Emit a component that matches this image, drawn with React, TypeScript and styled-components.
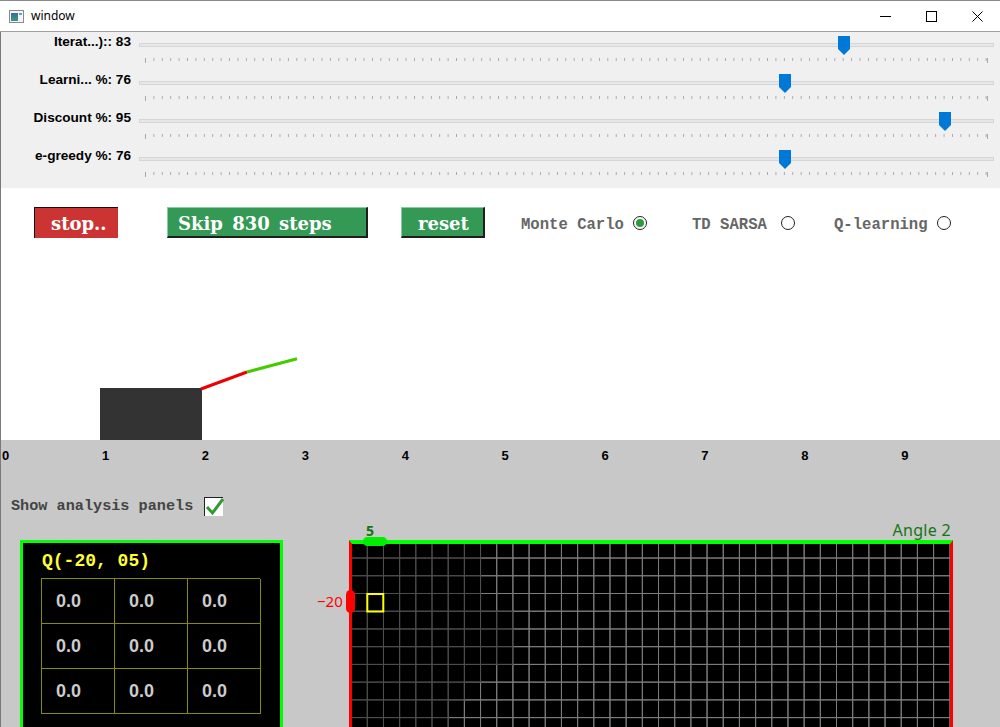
import React from 'react';
import styled, { createGlobalStyle } from 'styled-components';

const GlobalStyle = createGlobalStyle`
  html, body {
    margin: 0;
    padding: 0;
    background: #c8c8c8;
    overflow: hidden;
  }
  body {
    width: 1000px;
    height: 727px;
  }
`;

const Window = styled.div`
  width: 1000px;
  height: 727px;
  overflow: hidden;
  display: flex;
  flex-direction: column;
  border-top: 1px solid #8a8a8a;
  box-sizing: border-box;
`;

const TitleBar = styled.div`
  height: 30px;
  flex: 0 0 30px;
  background: #ffffff;
  border-bottom: 1px solid #a0a0a0;
  display: flex;
  align-items: center;
`;

const TitleText = styled.span`
  font-family: 'Noto Sans', 'Liberation Sans', sans-serif;
  font-size: 12px;
  color: #000;
  margin-left: 7px;
  margin-top: -1px;
`;

const TitleIcon = styled.div`
  margin-left: 9px;
  display: flex;
`;

const Spacer = styled.div`
  flex: 1;
`;

const CaptionButton = styled.div`
  width: 46px;
  height: 30px;
  display: flex;
  align-items: center;
  justify-content: center;
`;

const Body = styled.div`
  flex: 1;
  display: flex;
  flex-direction: column;
  border-left: 1px solid #7a7a7a;
`;

const SliderPanel = styled.div`
  background: #f0f0f0;
  height: 156px;
  padding-top: 1px;
  box-sizing: border-box;
`;

const SliderRow = styled.div`
  display: grid;
  grid-template-columns: 138px 1fr;
  height: 38px;
`;

const SliderLabel = styled.div`
  font-family: 'Liberation Sans', Arial, sans-serif;
  font-weight: bold;
  font-size: 13.6px;
  line-height: 15px;
  color: #000;
  text-align: right;
  padding-right: 8px;
  padding-top: 1px;
  white-space: nowrap;
`;

const SliderTrackArea = styled.div`
  position: relative;
  margin-right: 6px;
`;

const Track = styled.div`
  position: absolute;
  left: 0;
  right: 0;
  top: 10px;
  height: 2px;
  background: #e7e7e7;
  border: 1px solid #d6d6d6;
`;

const Ticks = styled.div`
  position: absolute;
  left: 6px;
  width: 843px;
  top: 25px;
  height: 3px;
  background-image: linear-gradient(to right, #a8a8a8 1px, transparent 1px);
  background-size: 8.42px 3px;
  background-repeat: repeat-x;

  &::before,
  &::after {
    content: '';
    position: absolute;
    top: 0;
    width: 1px;
    height: 5px;
    background: #a8a8a8;
  }
  &::before {
    left: 0;
  }
  &::after {
    right: 0;
  }
`;

const Thumb = styled.svg`
  position: absolute;
  top: 3px;
  width: 12px;
  height: 19px;
`;

const WhiteArea = styled.div`
  background: #ffffff;
  height: 252px;
  display: flex;
  flex-direction: column;
`;

const ControlsRow = styled.div`
  display: flex;
  align-items: center;
  height: 31px;
  margin-top: 19px;
  padding-left: 33px;
`;

const ActionButton = styled.div<{ $bg: string; $w: number; $pad: number; $gap: number; $pressed?: boolean }>`
  width: ${(p) => p.$w}px;
  height: 31px;
  margin-left: ${(p) => p.$gap}px;
  background: ${(p) => p.$bg};
  box-sizing: border-box;
  padding-left: ${(p) => p.$pad}px;
  padding-top: 2px;
  border-style: solid;
  border-width: ${(p) => (p.$pressed ? '1px 0 0 1px' : '1px 2px 2px 1px')};
  border-color: ${(p) => (p.$pressed ? '#111 #111 #111 #111' : '#8fc9a4 #1e1e1e #1e1e1e #8fc9a4')};
  color: #ffffff;
  font-family: 'DejaVu Serif', 'Liberation Serif', serif;
  font-weight: bold;
  font-size: 18px;
  line-height: 27px;
  white-space: nowrap;
  word-spacing: 3px;
`;

const RadioItem = styled.div<{ $gap: number }>`
  display: flex;
  align-items: center;
  margin-left: ${(p) => p.$gap}px;
  padding-top: 4px;
  font-family: 'Liberation Mono', 'Courier New', monospace;
  font-weight: bold;
  font-size: 15.6px;
  color: #666666;
  white-space: nowrap;
`;

const RadioText = styled.span<{ $w: number }>`
  display: inline-block;
  width: ${(p) => p.$w}px;
`;

const RadioCircle = styled.div<{ $on?: boolean }>`
  width: 12px;
  height: 12px;
  border: 1.5px solid #222;
  border-radius: 50%;
  margin-left: 9px;
  margin-top: -3px;
  display: flex;
  align-items: center;
  justify-content: center;
  background: #fff;

  &::after {
    content: '';
    display: ${(p) => (p.$on ? 'block' : 'none')};
    width: 8px;
    height: 8px;
    border-radius: 50%;
    background: #2f9a3c;
  }
`;

const Stage = styled.svg`
  display: block;
  margin-top: auto;
`;

const GrayArea = styled.div`
  flex: 1;
  background: #c8c8c8;
  display: flex;
  flex-direction: column;
`;

const Ruler = styled.div`
  display: flex;
  height: 30px;
  padding-top: 8px;
  box-sizing: border-box;
`;

const RulerMark = styled.div`
  width: 100px;
  padding-left: 1px;
  font-family: 'Liberation Sans', Arial, sans-serif;
  font-weight: bold;
  font-size: 13px;
  line-height: 15px;
  color: #000;
`;

const ToggleRow = styled.div`
  display: flex;
  align-items: center;
  margin-top: 26px;
  padding-left: 10px;
  height: 20px;
`;

const ToggleLabel = styled.span`
  font-family: 'Liberation Mono', 'Courier New', monospace;
  font-weight: bold;
  font-size: 15.2px;
  color: #444444;
  white-space: nowrap;
`;

const CheckBox = styled.div`
  width: 19px;
  height: 19px;
  margin-left: 11px;
  background: #ffffff;
  box-sizing: border-box;
  border-top: 1px solid #222;
  border-left: 1px solid #222;
  position: relative;
`;

const CheckMark = styled.svg`
  position: absolute;
  left: -1px;
  top: -3px;
`;

const PanelsRow = styled.div`
  display: flex;
  align-items: flex-start;
  margin-top: 6px;
  padding-left: 19px;
`;

const QPanel = styled.div`
  margin-top: 18px;
  width: 263px;
  height: 200px;
  box-sizing: border-box;
  background: #000;
  border: 3px solid #00ff00;
  padding: 6px 0 0 18px;
`;

const QTitle = styled.div`
  font-family: 'Liberation Mono', 'Courier New', monospace;
  font-weight: bold;
  font-size: 18px;
  line-height: 24px;
  color: #ffff33;
  padding-left: 1px;
  margin-bottom: 5px;
`;

const QTable = styled.div`
  display: grid;
  grid-template-columns: repeat(3, 73px);
  grid-auto-rows: 45px;
  width: 219px;
  border-top: 1px solid #8a8a00;
  border-left: 1px solid #8a8a00;
  box-sizing: border-box;
`;

const QCell = styled.div`
  border-right: 1px solid #8a8a00;
  border-bottom: 1px solid #8a8a00;
  display: flex;
  align-items: center;
  padding-left: 14px;
  font-family: 'Liberation Sans', Arial, sans-serif;
  font-weight: bold;
  font-size: 18px;
  color: #cccccc;
`;

const GridPanel = styled.div`
  margin-left: 66px;
  width: 604px;
  display: flex;
  flex-direction: column;
`;

const GridHeader = styled.div`
  height: 18px;
  display: flex;
  justify-content: flex-end;
  align-items: flex-end;
  position: relative;
`;

const AxisTitle = styled.span`
  font-family: 'Noto Sans', 'Liberation Sans', sans-serif;
  font-size: 16px;
  line-height: 18px;
  letter-spacing: 0.3px;
  color: #117711;
  margin-right: 2px;
  margin-bottom: 1px;
`;

const ColLabel = styled.span`
  position: absolute;
  left: 17px;
  bottom: 2px;
  font-family: 'Noto Sans', 'Liberation Sans', sans-serif;
  font-weight: bold;
  font-size: 14px;
  line-height: 14px;
  color: #117711;
`;

const GridBox = styled.div`
  position: relative;
  height: 200px;
  background: #000;
  border-left: 3px solid #ff0000;
  border-right: 3px solid #ff0000;
  border-top: 4px solid #00ff00;
`;

const ColHandle = styled.div`
  position: absolute;
  left: 11px;
  top: -7px;
  width: 24px;
  height: 9px;
  border-radius: 5px;
  background: #00ee00;
`;

const RowHandle = styled.div`
  position: absolute;
  left: -6px;
  top: 46px;
  width: 9px;
  height: 23px;
  border-radius: 5px;
  background: #ff0000;
`;

const RowLabel = styled.span`
  position: absolute;
  left: -35px;
  top: 50px;
  font-family: 'Noto Sans', 'Liberation Sans', sans-serif;
  font-size: 15px;
  line-height: 15px;
  color: #ff0000;
`;

const GridSvg = styled.svg`
  display: block;
`;

const sliders = [
  { label: 'Iterat...):: 83', value: 83 },
  { label: 'Learni... %: 76', value: 76 },
  { label: 'Discount %: 95', value: 95 },
  { label: 'e-greedy %: 76', value: 76 },
];

const COLS = 37;
const ROWS = 12;
const CW = 16.18;
const RH = 17.73;
const visited = [8, 8, 8, 8, 10, 10, 10, 8, 7, 6, 6, 5];

const CartGrid = () => {
  const cells: React.ReactNode[] = [];
  for (let pass = 0; pass < 2; pass++) {
    for (let r = 0; r < ROWS; r++) {
      for (let c = 0; c < COLS; c++) {
        const dark = c < visited[r];
        if ((pass === 0) === dark) continue;
        cells.push(
          <rect
            key={`${pass}-${r}-${c}`}
            x={-0.9 + c * CW}
            y={-3.7 + r * RH}
            width={CW}
            height={RH}
            fill="none"
            stroke={dark ? '#4e4e4e' : '#7c7c7c'}
            strokeWidth={1}
          />
        );
      }
    }
  }
  return (
    <GridSvg width={598} height={200}>
      {cells}
      <rect x={15.3} y={50} width={16} height={17.5} fill="none" stroke="#ffff00" strokeWidth={2} />
    </GridSvg>
  );
};

export default function App() {
  return (
    <>
      <GlobalStyle />
      <Window>
        <TitleBar>
          <TitleIcon>
            <svg width="15" height="13" viewBox="0 0 15 13">
              <rect x="0.5" y="0.5" width="14" height="12" fill="#f4f4f4" stroke="#8a8a8a" />
              <defs>
                <linearGradient id="ig" x1="0" y1="0" x2="0" y2="1">
                  <stop offset="0" stopColor="#2f6fa8" />
                  <stop offset="1" stopColor="#3f9a7a" />
                </linearGradient>
              </defs>
              <rect x="2" y="3" width="7" height="8" fill="url(#ig)" />
              <rect x="10" y="3" width="3" height="2" fill="#6aa0c8" />
            </svg>
          </TitleIcon>
          <TitleText>window</TitleText>
          <Spacer />
          <CaptionButton>
            <svg width="11" height="11" viewBox="0 0 11 11">
              <line x1="0" y1="5.5" x2="11" y2="5.5" stroke="#000" strokeWidth="1" />
            </svg>
          </CaptionButton>
          <CaptionButton>
            <svg width="11" height="11" viewBox="0 0 11 11">
              <rect x="0.5" y="0.5" width="10" height="10" fill="none" stroke="#000" strokeWidth="1" />
            </svg>
          </CaptionButton>
          <CaptionButton>
            <svg width="11" height="11" viewBox="0 0 11 11">
              <path d="M0.5 0.5 L10.5 10.5 M10.5 0.5 L0.5 10.5" stroke="#000" strokeWidth="1" />
            </svg>
          </CaptionButton>
        </TitleBar>

        <Body>
          <SliderPanel>
            {sliders.map((s) => (
              <SliderRow key={s.label}>
                <SliderLabel>{s.label}</SliderLabel>
                <SliderTrackArea>
                  <Track />
                  <Ticks />
                  <Thumb style={{ left: 6 + s.value * 8.42 - 6 }} viewBox="0 0 12 19">
                    <path d="M0 0 H12 V13 L6 19 L0 13 Z" fill="#0078d7" />
                  </Thumb>
                </SliderTrackArea>
              </SliderRow>
            ))}
          </SliderPanel>

          <WhiteArea>
            <ControlsRow>
              <ActionButton $bg="#cc3333" $w={84} $pad={16} $gap={0} $pressed>
                stop..
              </ActionButton>
              <ActionButton $bg="#339955" $w={201} $pad={10} $gap={49}>
                Skip 830 steps
              </ActionButton>
              <ActionButton $bg="#339955" $w={84} $pad={16} $gap={33}>
                reset
              </ActionButton>
              <RadioItem $gap={36}>
                <RadioText $w={103}>Monte Carlo</RadioText>
                <RadioCircle $on />
              </RadioItem>
              <RadioItem $gap={45}>
                <RadioText $w={80}>TD SARSA</RadioText>
                <RadioCircle />
              </RadioItem>
              <RadioItem $gap={39}>
                <RadioText $w={94}>Q-learning</RadioText>
                <RadioCircle />
              </RadioItem>
            </ControlsRow>
            <Stage width={999} height={182} viewBox="1 258 999 182">
              <rect x={100} y={388} width={102} height={52} fill="#333333" />
              <line x1={201} y1={389} x2={247} y2={372} stroke="#ee0000" strokeWidth={3} />
              <line x1={247} y1={372} x2={297} y2={358.7} stroke="#44cc00" strokeWidth={3} />
            </Stage>
          </WhiteArea>

          <GrayArea>
            <Ruler>
              {Array.from({ length: 10 }, (_, i) => (
                <RulerMark key={i}>{i}</RulerMark>
              ))}
            </Ruler>
            <ToggleRow>
              <ToggleLabel>Show analysis panels</ToggleLabel>
              <CheckBox>
                <CheckMark width="22" height="22" viewBox="0 0 22 22">
                  <path d="M3 12 L8.5 18 L19 4" fill="none" stroke="#339933" strokeWidth="3" />
                </CheckMark>
              </CheckBox>
            </ToggleRow>
            <PanelsRow>
              <QPanel>
                <QTitle>Q(-20, 05)</QTitle>
                <QTable>
                  {Array.from({ length: 9 }, (_, i) => (
                    <QCell key={i}>0.0</QCell>
                  ))}
                </QTable>
              </QPanel>
              <GridPanel>
                <GridHeader>
                  <ColLabel>5</ColLabel>
                  <AxisTitle>Angle 2</AxisTitle>
                </GridHeader>
                <GridBox>
                  <CartGrid />
                  <ColHandle />
                  <RowHandle />
                  <RowLabel>−20</RowLabel>
                </GridBox>
              </GridPanel>
            </PanelsRow>
          </GrayArea>
        </Body>
      </Window>
    </>
  );
}
